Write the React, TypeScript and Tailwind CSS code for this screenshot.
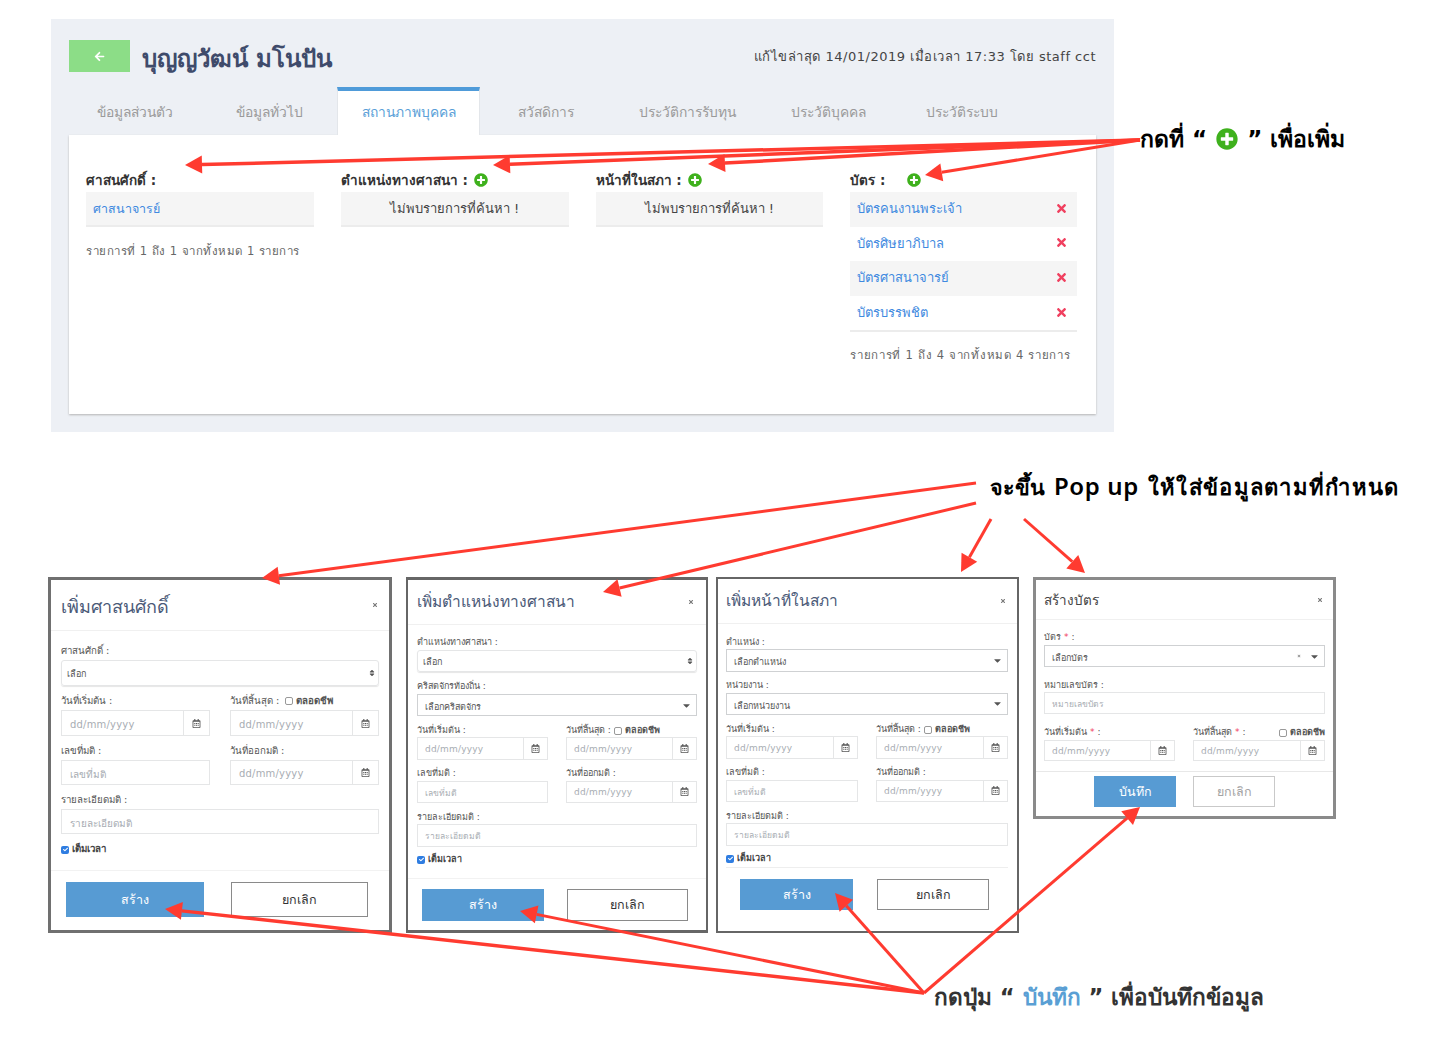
import React from "react";
import { FaPlusCircle, FaRegCalendarAlt, FaTimes, FaArrowLeft, FaCaretDown, FaSort, FaCheck } from "react-icons/fa";

function Arrow({ x1, y1, x2, y2, w = 3, len = 17, half = 9 }: { x1: number; y1: number; x2: number; y2: number; w?: number; len?: number; half?: number }) {
  const d = Math.hypot(x2 - x1, y2 - y1);
  const ux = (x2 - x1) / d;
  const uy = (y2 - y1) / d;
  const bx = x2 - ux * len;
  const by = y2 - uy * len;
  const pts = `${x2},${y2} ${bx - uy * half},${by + ux * half} ${bx + uy * half},${by - ux * half}`;
  return (
    <g>
      <line x1={x1} y1={y1} x2={bx} y2={by} stroke="#ff3b30" strokeWidth={w} />
      <polygon points={pts} fill="#ff3b30" />
    </g>
  );
}

function Plus({ className }: { className: string }) {
  return <FaPlusCircle className={`text-[#3fb11d] ${className}`} />;
}

function Label({ h, size = "text-[9px]", children }: { h: string; size?: string; children: React.ReactNode }) {
  return <div className={`flex items-center text-[#555] whitespace-nowrap ${size} ${h}`}>{children}</div>;
}

function Select({ h, round, text, clear }: { h: string; round?: boolean; text: string; clear?: boolean }) {
  return round ? (
    <div className={`flex items-center justify-between rounded-[3px] border border-[#e5e6e7] pl-[5px] pr-[2px] text-[9px] text-[#555] shadow-[0_1px_1px_#e6e6e6] ${h}`}>
      <span className="pt-[4px]">{text}</span>
      <FaSort className="text-[8px] text-[#555]" />
    </div>
  ) : (
    <div className={`flex items-center justify-between border border-[#cfd1d3] pl-[7px] pr-[4px] text-[9px] text-[#555] ${h}`}>
      <span className="pt-[5px]">{text}</span>
      <span className="flex items-center gap-[8px]">
        {clear && <FaTimes className="text-[4px] text-[#888]" />}
        <FaCaretDown className="text-[11px] text-[#555]" />
      </span>
    </div>
  );
}

function DateInput({ h, big }: { h: string; big?: boolean }) {
  return (
    <div className={`flex items-center border border-[#e5e6e7] ${h}`}>
      <div className={`flex-1 pt-[2px] tracking-[0.2px] text-[#a8adb3] ${big ? "pl-[8px] text-[10px]" : "pl-[7px] text-[9px]"}`}>dd/mm/yyyy</div>
      <div className={`flex h-full items-center justify-center border-l border-[#e5e6e7] ${big ? "w-[26px]" : "w-[24px]"}`}>
        <FaRegCalendarAlt className="text-[9px] text-[#555]" />
      </div>
    </div>
  );
}

function TextInput({ h, text, big }: { h: string; text: string; big?: boolean }) {
  return <div className={`flex items-center border border-[#e5e6e7] pt-[3px] text-[#a8adb3] ${big ? "pl-[8px] text-[10px]" : "pl-[7px] text-[8.5px]"} ${h}`}>{text}</div>;
}

function Life({ sep, wide }: { sep?: boolean; wide?: boolean }) {
  return (
    <span className={`flex items-center gap-[3px] font-bold text-[#555] ${sep ? "ml-auto" : wide ? "ml-[6px]" : "ml-[3px]"}`}>
      <span className="inline-block h-[8px] w-[8px] rounded-[2px] border border-[#999] bg-white" />
      ตลอดชีพ
    </span>
  );
}

function FullTime({ h, size = "text-[9px]" }: { h: string; size?: string }) {
  return (
    <div className={`flex items-center gap-[3px] font-bold text-[#444] ${size} ${h}`}>
      <span className="flex h-[8px] w-[8px] items-center justify-center rounded-[2px] bg-[#2f7de1]">
        <FaCheck className="text-[5px] text-white" />
      </span>
      เต็มเวลา
    </div>
  );
}

function Header({ h, pad, size, title, color = "text-[#4b5a78]" }: { h: string; pad: string; size: string; title: string; color?: string }) {
  return (
    <div className={`flex items-center justify-between border-b border-[#f0f0f0] ${h} ${pad}`}>
      <span className={`pt-[2px] ${size} ${color} whitespace-nowrap`}>{title}</span>
      <FaTimes className="text-[6px] text-[#777]" />
    </div>
  );
}

function Buttons({ save, cancelMuted, wrap, h, a, b, size }: { save: string; cancelMuted?: boolean; wrap: string; h: string; a: string; b: string; size: string }) {
  return (
    <div className={`flex ${wrap}`}>
      <div className={`flex items-center justify-center bg-[#579bd3] pt-[2px] text-white ${h} ${a} ${size}`}>{save}</div>
      <div
        className={`flex items-center justify-center border bg-white pt-[2px] ${h} ${b} ${size} ${
          cancelMuted ? "border-[#c9c9c9] text-[#a3a3a3]" : "border-[#8a8a8a] text-[#333]"
        }`}
      >
        ยกเลิก
      </div>
    </div>
  );
}

const tabs = [
  ["ข้อมูลส่วนตัว", "w-[132px]"],
  ["ข้อมูลทั่วไป", "w-[136px]"],
  ["สถานภาพบุคคล", "w-[143px]"],
  ["สวัสดิการ", "w-[132px]"],
  ["ประวัติการรับทุน", "w-[150px]"],
  ["ประวัติบุคคล", "w-[133px]"],
  ["ประวัติระบบ", "w-[133px]"],
];

function Empty() {
  return <div className="flex h-[35px] items-center justify-center border-b-2 border-[#ececec] bg-[#f5f5f5] pt-[1px] text-[13px] text-[#444]">ไม่พบรายการที่ค้นหา !</div>;
}

function CardRow({ text, shade }: { text: string; shade?: boolean }) {
  return (
    <div className={`flex h-[34.6px] items-center justify-between pl-[7px] pr-[9px] text-[13px] text-[#3f8ae0] ${shade ? "bg-[#f5f5f5]" : "bg-white"}`}>
      <span className="-mt-[1px]">{text}</span>
      <FaTimes className="-mt-[2px] text-[13px] text-[#f0405f]" />
    </div>
  );
}

function TopPanel() {
  return (
    <div className="absolute left-[51px] top-[19px] h-[413px] w-[1063px] bg-[#edf0f5] pl-[18px] pr-[18px] pt-[21px]">
      <div className="flex h-[47px] items-start">
        <div className="flex h-[32px] w-[61px] items-center justify-center bg-[#8cdd87]">
          <FaArrowLeft className="text-[11px] text-white" />
        </div>
        <div className="ml-[12px] mt-[3px] whitespace-nowrap text-[24px] font-bold leading-[32px] text-[#3f4b6b]">บุญญวัฒน์ มโนปัน</div>
        <div className="ml-auto mt-[7px] whitespace-nowrap text-[13px] tracking-[0.5px] text-[#444]">แก้ไขล่าสุด 14/01/2019 เมื่อเวลา 17:33 โดย staff cct</div>
      </div>
      <div className="flex h-[48px]">
        {tabs.map(([t, w], i) =>
          i === 2 ? (
            <div key={t} className={`flex items-center justify-center border-x border-[#e3e6ea] border-t-4 border-t-[#4f9bd9] bg-white pb-[2px] text-[13.8px] text-[#5a9fd8] ${w}`}>
              {t}
            </div>
          ) : (
            <div key={t} className={`flex items-center justify-center pt-[2px] text-[13.8px] text-[#9a9a9a] ${w}`}>
              {t}
            </div>
          ),
        )}
      </div>
      <div className="flex h-[279px] gap-[27px] bg-white pl-[17px] pr-[19px] pt-[36px] shadow-[0_1px_2px_#b5b5b5]">
        <div className="w-[228px]">
          <div className="flex h-[21px] items-center pb-[3px] text-[13.5px] font-bold text-[#333]">ศาสนศักดิ์ :</div>
          <div className="flex h-[35px] items-center border-b-2 border-[#ececec] bg-[#f5f5f5] pl-[7px] pt-[1px] text-[12.5px] text-[#3f8ae0]">ศาสนาจารย์</div>
          <div className="mt-[16px] whitespace-nowrap text-[11.5px] tracking-[0.5px] text-[#666]">รายการที่ 1 ถึง 1 จากทั้งหมด 1 รายการ</div>
        </div>
        <div className="w-[228px]">
          <div className="flex h-[21px] items-center gap-[6px] pb-[3px] text-[13.5px] font-bold text-[#333] whitespace-nowrap">ตำแหน่งทางศาสนา :<Plus className="text-[14px]" /></div>
          <Empty />
        </div>
        <div className="w-[228px]">
          <div className="flex h-[21px] items-center gap-[6px] pb-[3px] text-[13.5px] font-bold text-[#333]">หน้าที่ในสภา :<Plus className="text-[14px]" /></div>
          <Empty />
        </div>
        <div className="w-[227px]">
          <div className="flex h-[21px] items-center pb-[3px] text-[13.5px] font-bold text-[#333]">
            บัตร :<Plus className="ml-[22px] text-[14px]" />
          </div>
          <CardRow text="บัตรคนงานพระเจ้า" shade />
          <CardRow text="บัตรศิษยาภิบาล" />
          <CardRow text="บัตรศาสนาจารย์" shade />
          <CardRow text="บัตรบรรพชิต" />
          <div className="border-t-2 border-[#ececec]" />
          <div className="mt-[15px] whitespace-nowrap text-[11.5px] tracking-[0.7px] text-[#666]">รายการที่ 1 ถึง 4 จากทั้งหมด 4 รายการ</div>
        </div>
      </div>
    </div>
  );
}

function Modal1() {
  const l = "h-[24px] pt-[6px]";
  const s = "text-[9.7px]";
  return (
    <div className="absolute left-[48px] top-[577px] h-[356px] w-[344px] border-[3px] border-[#707070] bg-white">
      <Header h="h-[51px]" pad="pl-[10px] pr-[11px]" size="text-[18px]" title="เพิ่มศาสนศักดิ์" />
      <div className="pl-[10px] pr-[10px] pt-[5px]">
        <Label h={l} size={s}>ศาสนศักดิ์ :</Label>
        <Select h="h-[26px]" round text="เลือก" />
        <div className="grid grid-cols-[149px_149px] gap-x-[20px]">
          <div>
            <Label h={l} size={s}>วันที่เริ่มต้น :</Label>
            <DateInput big h="h-[26px]" />
          </div>
          <div>
            <Label h={l} size={s}>วันที่สิ้นสุด :<Life wide /></Label>
            <DateInput big h="h-[26px]" />
          </div>
          <div>
            <Label h={l} size={s}>เลขที่มติ :</Label>
            <TextInput big h="h-[25px]" text="เลขที่มติ" />
          </div>
          <div>
            <Label h={l} size={s}>วันที่ออกมติ :</Label>
            <DateInput big h="h-[25px]" />
          </div>
        </div>
        <Label h={l} size={s}>รายละเอียดมติ :</Label>
        <TextInput big h="h-[25px]" text="รายละเอียดมติ" />
        <FullTime h="h-[28px] pt-[3px]" size={s} />
      </div>
      <Buttons save="สร้าง" wrap="mt-[8px] gap-[27px] border-t border-[#f2f2f2] pl-[15px] pt-[11px]" h="h-[35px]" a="w-[138px]" b="w-[137px]" size="text-[12.5px]" />
    </div>
  );
}

function Modal2() {
  const l = "h-[21px] pt-[8px]";
  return (
    <div className="absolute left-[406px] top-[577px] h-[356px] w-[302px] border-x-2 border-y-[3px] border-[#666] bg-white">
      <Header h="h-[45px]" pad="pl-[9px] pr-[12px]" size="text-[15.5px]" title="เพิ่มตำแหน่งทางศาสนา" />
      <div className="pl-[9px] pr-[9px] pt-[3px]">
        <Label h="h-[22px] pt-[8px]">ตำแหน่งทางศาสนา :</Label>
        <Select h="h-[22px]" round text="เลือก" />
        <Label h="h-[22px] pt-[8px]">คริสตจักรท้องถิ่น :</Label>
        <Select h="h-[22px]" text="เลือกคริสตจักร" />
        <div className="grid grid-cols-[131px_131px] gap-x-[18px]">
          <div>
            <Label h={l}>วันที่เริ่มต้น :</Label>
            <DateInput h="h-[22.5px]" />
          </div>
          <div>
            <Label h={l}>วันที่สิ้นสุด :<Life /></Label>
            <DateInput h="h-[22.5px]" />
          </div>
          <div>
            <Label h={l}>เลขที่มติ :</Label>
            <TextInput h="h-[22.5px]" text="เลขที่มติ" />
          </div>
          <div>
            <Label h={l}>วันที่ออกมติ :</Label>
            <DateInput h="h-[22.5px]" />
          </div>
        </div>
        <Label h={l}>รายละเอียดมติ :</Label>
        <TextInput h="h-[22.5px]" text="รายละเอียดมติ" />
        <FullTime h="h-[24px] pt-[2px]" />
      </div>
      <Buttons save="สร้าง" wrap="mt-[7px] gap-[23px] border-t border-[#f2f2f2] pl-[14px] pt-[10px]" h="h-[32px]" a="w-[122px]" b="w-[121px]" size="text-[12.5px]" />
    </div>
  );
}

function Modal3() {
  const l = "h-[21px] pt-[8px]";
  return (
    <div className="absolute left-[716px] top-[577px] h-[356px] w-[303px] border-2 border-[#666] bg-white">
      <Header h="h-[45px]" pad="pl-[8px] pr-[11px]" size="text-[15.5px]" title="เพิ่มหน้าที่ในสภา" />
      <div className="pl-[8px] pr-[9px] pt-[4px]">
        <Label h={l}>ตำแหน่ง :</Label>
        <Select h="h-[22.5px]" text="เลือกตำแหน่ง" />
        <Label h={l}>หน่วยงาน :</Label>
        <Select h="h-[22.5px]" text="เลือกหน่วยงาน" />
        <div className="grid grid-cols-[132px_132px] gap-x-[18px]">
          <div>
            <Label h={l}>วันที่เริ่มต้น :</Label>
            <DateInput h="h-[22.5px]" />
          </div>
          <div>
            <Label h={l}>วันที่สิ้นสุด :<Life /></Label>
            <DateInput h="h-[22.5px]" />
          </div>
          <div>
            <Label h={l}>เลขที่มติ :</Label>
            <TextInput h="h-[22.5px]" text="เลขที่มติ" />
          </div>
          <div>
            <Label h={l}>วันที่ออกมติ :</Label>
            <DateInput h="h-[22.5px]" />
          </div>
        </div>
        <Label h={l}>รายละเอียดมติ :</Label>
        <TextInput h="h-[22.5px]" text="รายละเอียดมติ" />
        <FullTime h="h-[22px] border-b border-[#eee] pt-[5px]" />
      </div>
      <Buttons save="สร้าง" wrap="gap-[24px] pl-[22px] pt-[11px]" h="h-[31px]" a="w-[113px]" b="w-[112px]" size="text-[12.5px]" />
    </div>
  );
}

function Modal4() {
  const star = <span className="mx-[3px] text-[#f0405f]">*</span>;
  return (
    <div className="absolute left-[1033px] top-[577px] h-[242px] w-[303px] border-[3px] border-[#8a8a8a] bg-white">
      <Header h="h-[40px]" pad="pl-[8px] pr-[10px]" size="text-[13.5px]" title="สร้างบัตร" color="text-[#444]" />
      <div className="px-[8px] pt-[4px]">
        <Label h="h-[21px] pt-[6px]">บัตร {star}:</Label>
        <Select h="h-[22px]" clear text="เลือกบัตร" />
        <Label h="h-[25px] pt-[12px]">หมายเลขบัตร :</Label>
        <TextInput h="h-[22px]" text="หมายเลขบัตร" />
        <div className="grid grid-cols-[131px_132px] gap-x-[18px]">
          <div>
            <Label h="h-[26px] pt-[11px]">วันที่เริ่มต้น {star}:</Label>
            <DateInput h="h-[21px]" />
          </div>
          <div>
            <Label h="h-[26px] pt-[11px]">วันที่สิ้นสุด {star}:<Life sep /></Label>
            <DateInput h="h-[21px]" />
          </div>
        </div>
      </div>
      <Buttons save="บันทึก" cancelMuted wrap="mt-[10px] gap-[17px] border-t border-[#e8e8e8] pl-[58px] pt-[4px]" h="h-[31px]" a="w-[82px]" b="w-[82px]" size="text-[12.5px]" />
    </div>
  );
}

export default function App() {
  return (
    <div className="relative h-[1037px] w-[1440px] overflow-hidden bg-white font-['DejaVu_Sans','Noto_Sans',sans-serif]">
      <TopPanel />
      <Modal1 />
      <Modal2 />
      <Modal3 />
      <Modal4 />

      <div className="absolute left-[1140px] top-[122px] flex items-center gap-[9px] whitespace-nowrap text-[23px] font-bold text-black">
        กดที่ “<FaPlusCircle className="text-[22px] text-[#3fb11d]" />” เพื่อเพิ่ม
      </div>
      <div className="absolute left-[990px] top-[468px] flex items-baseline whitespace-nowrap text-[21.5px] font-bold text-black">
        จะขึ้น
        <span className="ml-[9px] font-['Noto_Sans',sans-serif] text-[24px] font-semibold tracking-[0.6px]">Pop up</span>
        <span className="ml-[9px] text-[22px] tracking-[1.3px]">ให้ใส่ข้อมูลตามที่กำหนด</span>
      </div>
      <div className="absolute left-[934px] top-[981px] whitespace-nowrap text-[22.6px] font-bold text-[#333]">
        กดปุ่ม “ <span className="text-[#5a9fd4]">บันทึก</span> ” เพื่อบันทึกข้อมูล
      </div>

      <svg className="pointer-events-none absolute left-0 top-0" width="1440" height="1037">
        <Arrow x1={1140} y1={140} x2={185} y2={165} w={3.5} />
        <Arrow x1={1140} y1={140} x2={493} y2={165} w={3.5} />
        <Arrow x1={1140} y1={140} x2={708} y2={164} w={3.5} />
        <Arrow x1={1140} y1={140} x2={925} y2={175} w={3} />
        <Arrow x1={976} y1={483} x2={262} y2={578} />
        <Arrow x1={976} y1={503} x2={603} y2={592} />
        <Arrow x1={991} y1={519} x2={961} y2={572} />
        <Arrow x1={1024} y1={519} x2={1085} y2={573} />
        <Arrow x1={924} y1={993} x2={165} y2={909} w={3.5} />
        <Arrow x1={924} y1={993} x2={520} y2={911} w={3} />
        <Arrow x1={924} y1={993} x2={835} y2={893} />
        <Arrow x1={924} y1={993} x2={1140} y2={807} />
      </svg>
    </div>
  );
}
